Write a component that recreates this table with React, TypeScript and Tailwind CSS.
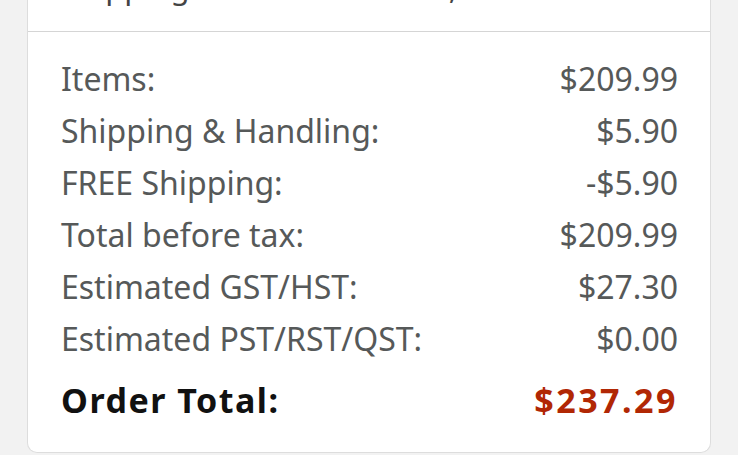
const rows = [
  { label: "Items:", value: "$209.99" },
  { label: "Shipping & Handling:", value: "$5.90" },
  { label: "FREE Shipping:", value: "-$5.90" },
  { label: "Total before tax:", value: "$209.99" },
  { label: "Estimated GST/HST:", value: "$27.30" },
  { label: "Estimated PST/RST/QST:", value: "$0.00" },
];

export default function App() {
  return (
    <div
      className="h-[455px] w-[738px] overflow-hidden bg-[#f2f2f2] px-[27px]"
      style={{ fontFamily: '"Noto Sans", "Liberation Sans", sans-serif' }}
    >
      <div className="flex h-[453px] flex-col rounded-b-[10px] border-x border-b border-[#dddddd] bg-white">
        {/* Shipping line, scrolled mostly out of view */}
        <div className="flex h-[31px] flex-col justify-end overflow-hidden pb-[29px] pl-[33px]">
          <p className="whitespace-nowrap text-[31px] leading-[30px] text-[#444444]">
            Shipping to Sara Anderson, Toronto
          </p>
        </div>

        {/* Order summary */}
        <div className="flex flex-1 flex-col border-t border-[#d5d5d5] pl-[33px] pr-[32px] pt-[21px]">
          {rows.map((row) => (
            <div
              key={row.label}
              className="flex h-[52px] items-center justify-between text-[32px] text-[#565959]"
            >
              <span>{row.label}</span>
              <span>{row.value}</span>
            </div>
          ))}

          <div className="mt-[9px] flex h-[52px] items-center justify-between text-[34px] font-bold">
            <span className="tracking-[1.5px] text-[#111111]">Order Total:</span>
            <span className="tracking-[2.5px] text-[#b12704]">$237.29</span>
          </div>
        </div>
      </div>
    </div>
  );
}
